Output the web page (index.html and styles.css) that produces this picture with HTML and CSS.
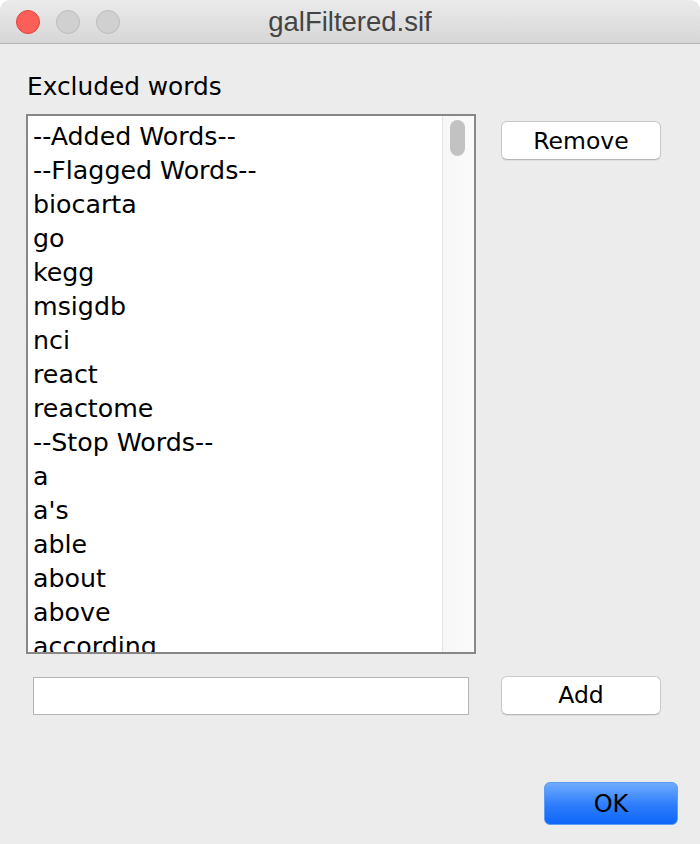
FILE: index.html
```html
<!DOCTYPE html>
<html>
<head>
<meta charset="utf-8">
<link rel="stylesheet" href="styles.css">
</head>
<body>
<div class="window">
  <div class="titlebar">
    <div class="lights">
      <span class="light red"></span>
      <span class="light gray"></span>
      <span class="light gray"></span>
    </div>
    <div class="title">galFiltered.sif</div>
  </div>
  <div class="content">
    <div class="label">Excluded words</div>
    <div class="main">
      <div class="listbox">
        <ul class="items">
          <li>--Added Words--</li>
          <li>--Flagged Words--</li>
          <li>biocarta</li>
          <li>go</li>
          <li>kegg</li>
          <li>msigdb</li>
          <li>nci</li>
          <li>react</li>
          <li>reactome</li>
          <li>--Stop Words--</li>
          <li>a</li>
          <li>a's</li>
          <li>able</li>
          <li>about</li>
          <li>above</li>
          <li>according</li>
        </ul>
        <div class="track"><div class="thumb"></div></div>
      </div>
      <div class="side">
        <button class="btn">Remove</button>
      </div>
    </div>
    <div class="addrow">
      <input class="field" type="text">
      <button class="btn">Add</button>
    </div>
    <div class="footer">
      <button class="ok">OK</button>
    </div>
  </div>
</div>
</body>
</html>
```
FILE: styles.css
```css
html, body {
  margin: 0;
  padding: 0;
  background: #ffffff;
}
.window {
  width: 700px;
  height: 844px;
  background: #ececec;
  border-radius: 10px 10px 0 0;
  overflow: hidden;
  display: flex;
  flex-direction: column;
  font-family: "DejaVu Sans", sans-serif;
  color: #000;
}
.titlebar {
  position: relative;
  height: 43px;
  flex: none;
  background: linear-gradient(#ebebeb, #d6d6d6);
  border-bottom: 1px solid #b3b3b3;
  display: flex;
  align-items: center;
}
.lights {
  display: flex;
  gap: 16px;
  padding-left: 16px;
}
.light {
  width: 22px;
  height: 22px;
  border-radius: 50%;
  display: block;
}
.light.red {
  background: #fc5f57;
  border: 1px solid #e0443e;
}
.light.gray {
  background: #d0d0d0;
  border: 1px solid #bcbcbc;
}
.title {
  position: absolute;
  left: 0;
  right: 0;
  top: 0;
  line-height: 43px;
  text-align: center;
  font-family: "Liberation Sans", Arial, sans-serif;
  font-size: 27.5px;
  color: #444444;
}
.content {
  flex: 1;
  display: flex;
  flex-direction: column;
  padding: 0 22px 0 26px;
}
.label {
  font-size: 24.8px;
  line-height: 30px;
  margin-top: 28px;
  margin-left: 1px;
}
.main {
  display: flex;
  margin-top: 12px;
}
.listbox {
  position: relative;
  width: 446px;
  height: 536px;
  border: 2px solid #878787;
  background: #ffffff;
  overflow: hidden;
  flex: none;
}
.items {
  list-style: none;
  margin: 0;
  padding: 4px 0 0 5px;
  font-size: 25.3px;
}
.items li {
  height: 34px;
  line-height: 34px;
  white-space: nowrap;
}
.track {
  position: absolute;
  top: 0;
  right: 0;
  bottom: 0;
  width: 31px;
  background: linear-gradient(90deg, #f7f7f7, #fafafa);
  border-left: 1px solid #e4e4e4;
}
.thumb {
  margin: 4px 0 0 7px;
  width: 15px;
  height: 36px;
  border-radius: 8px;
  background: #c2c2c2;
}
.side {
  margin-left: 25px;
  padding-top: 7px;
}
.btn {
  width: 160px;
  height: 39px;
  background: #ffffff;
  border: 1px solid #c9c9c9;
  border-bottom-color: #b6b6b6;
  border-radius: 6px;
  box-shadow: 0 1px 1px rgba(0,0,0,0.06);
  font-family: "DejaVu Sans", sans-serif;
  font-size: 23.5px;
  color: #000;
  padding: 0;
}
.addrow {
  display: flex;
  align-items: center;
  margin-top: 21px;
}
.field {
  width: 436px;
  height: 38px;
  box-sizing: border-box;
  margin: 2px 0 0 7px;
  border: 1px solid #b5b5b5;
  background: #ffffff;
  padding: 0;
  outline: none;
}
.addrow .btn {
  margin-left: 32px;
}
.footer {
  display: flex;
  justify-content: flex-end;
  margin-top: 67px;
}
.ok {
  width: 134px;
  height: 43px;
  border-radius: 6px;
  border: 1px solid #5b9cf6;
  background: linear-gradient(#6eacfd, #2c7cfb 55%, #0f66fa);
  font-family: "DejaVu Sans", sans-serif;
  font-size: 24px;
  color: #000;
  padding: 0;
}
```
